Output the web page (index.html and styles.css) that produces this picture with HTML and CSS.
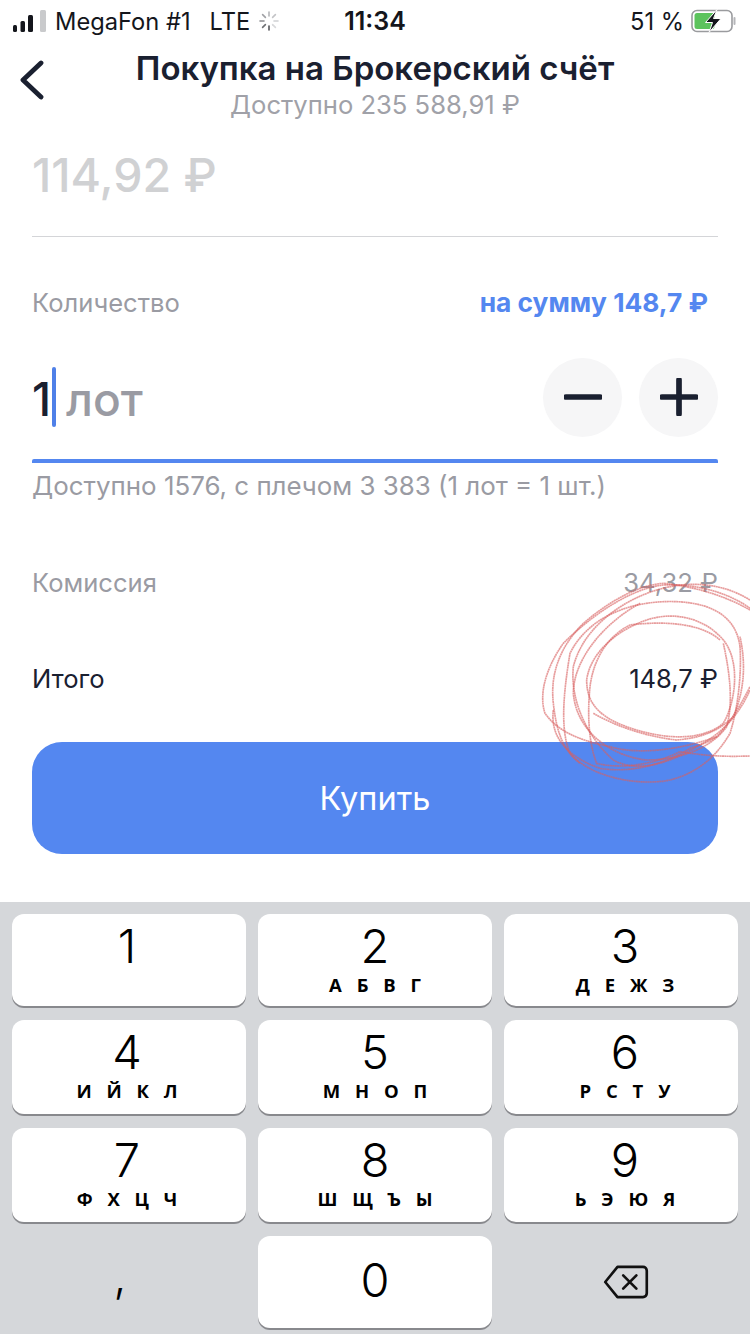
FILE: index.html
```
<!DOCTYPE html>
<html lang="ru">
<head>
<meta charset="utf-8">
<title>Покупка</title>
<link rel="stylesheet" href="styles.css">
</head>
<body>
<div class="screen">
  <div class="status">
    <div class="status-left">
      <svg class="signal" width="33" height="22" viewBox="0 0 33 22"><rect x="0" y="15" width="4" height="7" rx="1.5" fill="#14161c"/><rect x="7.5" y="11" width="4.5" height="11" rx="1.5" fill="#14161c"/><rect x="15" y="5" width="5" height="17" rx="1.5" fill="#14161c"/><rect x="27" y="0" width="6" height="22" rx="1.5" fill="#c9cacc"/></svg>
      <span class="carrier">MegaFon #1</span>
      <span class="net">LTE</span>
      <svg class="spinner" width="20" height="20" viewBox="0 0 20 20" stroke-width="1.6" stroke-linecap="round"><path d="M10 1v4" stroke="#b5b6b9"/><path d="M16.4 3.6l-2.8 2.8" stroke="#c3c4c7"/><path d="M19 10h-4" stroke="#d0d1d3"/><path d="M16.4 16.4l-2.8-2.8" stroke="#d8d9db"/><path d="M10 19v-4" stroke="#55565a"/><path d="M3.6 16.4l2.8-2.8" stroke="#6e6f73"/><path d="M1 10h4" stroke="#8a8b8f"/><path d="M3.6 3.6l2.8 2.8" stroke="#a0a1a5"/></svg>
    </div>
    <div class="time">11:34</div>
    <div class="status-right">
      <span class="pct">51 %</span>
      <svg class="battery" width="46" height="24" viewBox="0 0 46 24"><rect x="1" y="1.5" width="40" height="21" rx="5" fill="none" stroke="#9a9b9e" stroke-width="1.6"/><rect x="3.5" y="4" width="20" height="16" rx="2.5" fill="#5cc35d"/><path d="M43.5 9v6" stroke="#b5b6b9" stroke-width="2" stroke-linecap="round"/><path d="M26 0.5L14.5 13.5h7L18 23.5 30 9.5h-7.5z" fill="#14161c" stroke="#fff" stroke-width="1"/></svg>
    </div>
  </div>

  <header class="nav">
    <svg class="back" width="28" height="42" viewBox="0 0 28 42"><path d="M23 3L5 20l18 17" fill="none" stroke="#1a2030" stroke-width="4.8" stroke-linecap="round" stroke-linejoin="round"/></svg>
    <h1 class="title">Покупка на Брокерский счёт</h1>
    <p class="subtitle">Доступно 235 588,91 ₽</p>
  </header>

  <main class="form">
    <div class="price">114,92 ₽</div>
    <div class="row qty-head">
      <span class="label">Количество</span>
      <span class="sum">на сумму 148,7 ₽</span>
    </div>
    <div class="input-row">
      <div class="value"><span class="num">1</span><span class="caret"></span><span class="unit">лот</span></div>
      <div class="steppers">
        <button class="step"><svg width="40" height="40" viewBox="0 0 40 40"><path d="M2 20h36" stroke="#1a2030" stroke-width="6" stroke-linecap="round"/></svg></button>
        <button class="step"><svg width="40" height="40" viewBox="0 0 40 40"><path d="M2 20h36M20 2v36" stroke="#1a2030" stroke-width="6" stroke-linecap="round"/></svg></button>
      </div>
    </div>
    <div class="hint">Доступно 1576, с плечом 3 383 (1 лот = 1 шт.)</div>
    <div class="row fee"><span class="label">Комиссия</span><span class="label">34,32 ₽</span></div>
    <div class="row total"><span>Итого</span><span>148,7 ₽</span></div>
    <button class="buy">Купить</button>
  </main>

  <section class="keyboard">
    <div class="key"><span class="d">1</span></div>
    <div class="key"><span class="d">2</span><span class="l">А Б В Г</span></div>
    <div class="key"><span class="d">3</span><span class="l">Д Е Ж З</span></div>
    <div class="key"><span class="d">4</span><span class="l">И Й К Л</span></div>
    <div class="key"><span class="d">5</span><span class="l">М Н О П</span></div>
    <div class="key"><span class="d">6</span><span class="l">Р С Т У</span></div>
    <div class="key"><span class="d">7</span><span class="l">Ф Х Ц Ч</span></div>
    <div class="key"><span class="d">8</span><span class="l">Ш Щ Ъ Ы</span></div>
    <div class="key"><span class="d">9</span><span class="l">Ь Э Ю Я</span></div>
    <div class="key bare"><span class="comma">,</span></div>
    <div class="key"><span class="d zero">0</span></div>
    <div class="key bare"><svg width="46" height="34" viewBox="0 0 48 36"><path d="M15 2h27a4 4 0 0 1 4 4v24a4 4 0 0 1-4 4H15L2 18z" fill="none" stroke="#111" stroke-width="2.8" stroke-linejoin="round"/><path d="M21 11l14 14M35 11L21 25" stroke="#111" stroke-width="2.8" stroke-linecap="round"/></svg></div>
  </section>

  <svg class="scribble" width="220" height="240" viewBox="0 0 660 720" fill="none" stroke="#d8605f" stroke-opacity=".62" stroke-width="5" stroke-dasharray="6 1">
    <path d="M660 145C600 100 500 70 400 75C300 85 180 170 100 250C50 320 25 400 45 460C80 510 140 540 240 560C340 590 480 560 560 530C610 480 650 400 660 380"/>
    <path d="M630 260C620 180 560 130 440 125C320 120 180 160 120 280C100 400 90 510 120 580C180 650 320 680 420 660C500 640 560 590 600 520C625 440 635 340 630 260"/>
    <path d="M580 240C530 180 440 150 350 180C260 210 180 280 170 360C170 440 220 480 320 510C420 540 520 540 580 490C620 420 630 300 580 240"/>
    <path d="M660 120C580 70 480 60 380 90C280 120 160 200 130 320C120 420 170 530 250 600C320 640 420 610 500 560C560 530 620 480 660 390"/>
    <path d="M570 240C520 195 420 180 300 195C230 230 190 300 180 380C170 480 180 560 200 610C280 630 380 610 450 575C540 590 600 590 660 588"/>
    <path d="M70 450C60 530 110 590 210 625C300 640 400 615 480 565C510 555 540 545 560 530"/>
    <path d="M580 250C600 340 610 430 590 500C540 570 440 600 350 600C250 590 140 520 130 400C130 300 220 190 330 130"/>
    <path d="M660 150C590 110 500 80 400 70C320 75 230 130 160 190C90 260 60 340 70 430C80 520 100 570 150 610"/>
    <path d="M190 460C260 500 350 530 440 540C500 535 560 520 610 470C640 400 650 320 630 230"/>
  </svg>
</div>
</body>
</html>
```
FILE: styles.css
```
* { box-sizing: border-box; }
html, body { margin: 0; padding: 0; }
body { background: #fff; font-family: Inter, "Noto Sans", sans-serif; color: #1a2030; }
.screen { position: relative; width: 750px; height: 1334px; overflow: hidden; display: flex; flex-direction: column; background: #fff; }

.status { height: 42px; padding: 0 13px 0 13px; display: grid; grid-template-columns: 1fr auto 1fr; align-items: center; font-size: 23.7px; color: #14161c; flex: none; }
.status-left { display: flex; align-items: center; }
.signal { margin-right: 9px; }
.carrier { margin-right: 19px; }
.spinner { margin-left: 9px; }
.time { font-weight: 600; font-size: 25px; }
.status-right { display: flex; align-items: center; justify-content: flex-end; }
.pct { margin-right: 7px; }
.battery { display: block; }

.nav { position: relative; flex: none; height: 84px; text-align: center; }
.back { position: absolute; left: 18px; top: 18px; }
.title { margin: 7px 0 3px; font-size: 33px; line-height: 38px; font-weight: 600; color: #1a2030; }
.subtitle { margin: 0; font-size: 25.6px; line-height: 30px; color: #a0a1a8; }

.form { flex: none; height: 776px; padding: 0 32px; display: flex; flex-direction: column; }
.price { font-size: 46.5px; height: 111px; padding-top: 21px; font-weight: 500; color: #d0d1d3; border-bottom: 1px solid #d4d5d8; line-height: 56px; }
.row { display: flex; justify-content: space-between; align-items: center; }
.qty-head { margin-top: 50px; height: 30px; }
.label { color: #9a9ba3; font-size: 25.6px; }
.sum { color: #5487f0; font-weight: 700; font-size: 26.3px; padding-right: 10px; }
.input-row { margin-top: 40px; height: 80px; display: flex; align-items: center; justify-content: space-between; }
.value { display: flex; align-items: center; font-size: 46px; font-weight: 500; }
.num { color: #1a2030; margin-top: 3px; }
.caret { width: 4px; height: 60px; border-radius: 2px; background: #4f80e8; margin: 0 10px 0 1px; }
.unit { color: #9a9ba3; margin-top: 3px; }
.steppers { display: flex; gap: 17px; }
.step { width: 79px; height: 79px; border: 0; border-radius: 50%; background: #f6f6f7; padding: 0; display: flex; align-items: center; justify-content: center; }
.step svg { display: block; width: 38px; height: 38px; }
.hint { margin-top: 22px; padding-top: 8px; border-top: 4px solid #5487f0; border-radius: 2px; font-size: 25.9px; line-height: 30px; color: #9a9ba3; }
.fee { margin-top: 66px; height: 30px; }
.total { margin-top: 66px; height: 30px; font-size: 25.6px; color: #1a2030; }
.buy { margin-top: 49px; height: 112px; width: 100%; border: 0; border-radius: 30px; background: #5487f0; color: #fff; font-family: Inter, sans-serif; font-size: 32.5px; font-weight: 400; }

.keyboard { flex: 1; background: #d5d7da; padding: 12px 12px 0; display: grid; grid-template-columns: repeat(3, 234px); grid-template-rows: 92px 94px 94px 92px; column-gap: 12px; row-gap: 14px; align-content: start; }
.key { background: #fff; border-radius: 12px; box-shadow: 0 2px 0 #88898d; display: flex; flex-direction: column; align-items: center; color: #000; }
.key:nth-child(3n+1) { padding-right: 4px; }
.key:nth-child(3n) { padding-left: 8px; }
.d { font-size: 47px; line-height: 54px; margin-top: 5px; font-weight: 300; }
.zero { margin-top: 17px; }
.l { font-size: 18.5px; line-height: 22px; font-weight: 700; word-spacing: 10px; margin-top: 1px; font-family: "Open Sans", sans-serif; }
.bare { background: transparent; box-shadow: none; justify-content: center; }
.key.bare:nth-child(3n+1) { padding-right: 18px; }
.key.bare:nth-child(3n) { padding-left: 10px; }
.comma { font-size: 46px; font-weight: 300; line-height: 46px; margin-bottom: 14px; }

.scribble { position: absolute; left: 530px; top: 560px; pointer-events: none; }
```
